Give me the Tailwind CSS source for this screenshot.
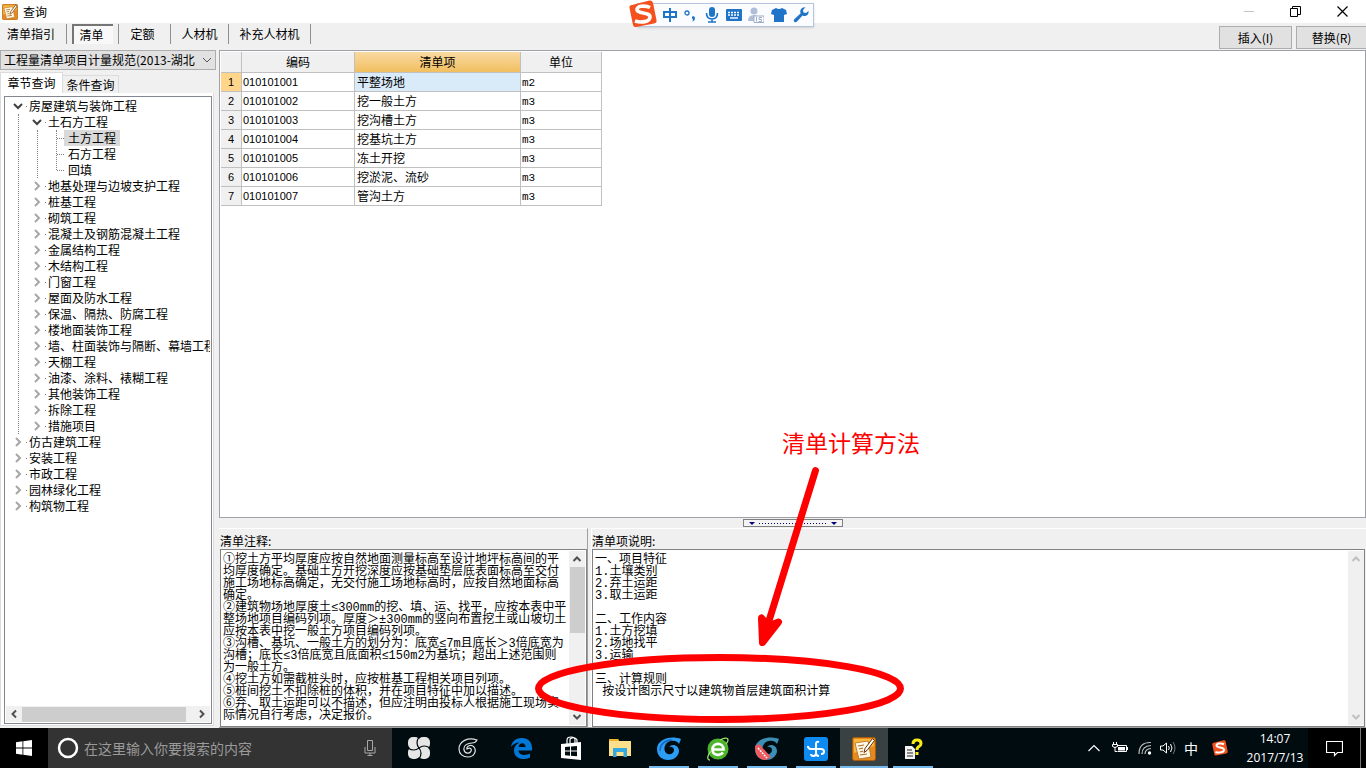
<!DOCTYPE html>
<html lang="zh-CN">
<head>
<meta charset="utf-8">
<title>查询</title>
<script src="https://cdn.jsdelivr.net/npm/@tailwindcss/browser@4"></script>
</head>
<body class="relative flex h-screen flex-col overflow-hidden bg-[#f0f0f0] font-['Noto_Sans_CJK_SC',sans-serif] text-xs leading-4 text-black">
<svg class="hidden">
  <symbol id="right" viewBox="0 0 10 10"><path d="M3 1l4 4-4 4" fill="none" stroke="#a6a6a6" stroke-width="2"/></symbol>
  <symbol id="down" viewBox="0 0 10 10"><path d="M1 3l4 4 4-4" fill="none" stroke="#404040" stroke-width="2"/></symbol>
  <symbol id="arrow" viewBox="0 0 10 10"><path d="M1.500 7L5 3.500 8.500 7" fill="none" stroke="currentColor" stroke-width="2"/></symbol>
  <symbol id="note" viewBox="0 0 24 24">
    <rect x=".5" y=".5" width="23" height="23" rx="2" fill="#e58a1c" stroke="#a85a0c"/>
    <path d="M2 2h20v7L2 16z" fill="#f9b93f"/>
    <path d="M3 6l13-2 3 16-12 2z" fill="#fff8e4" stroke="#b36a1e" stroke-width=".8"/>
    <path d="M6 9l6-1M7 12l4-1M8 15l3-1M8 18l7-1" stroke="#b06a2a" stroke-width="1.200"/>
    <path d="M20.500 1.500l2 2-7.500 10-3 2 1-4z" fill="#fff" stroke="#6a3206" stroke-width="1"/>
  </symbol>
  <symbol id="sogou" viewBox="0 0 28 28">
    <path d="M3 5Q0 5 .5 8L4 25q.5 2.500 3 2l18-3.500q3-.5 2.500-3.500L24 3q-.5-3-3.500-2.500z" fill="#f4511e"/>
    <path d="M21 7.500C16 5 7 6 8 10s13 2 13 7-9 6-15 4" fill="none" stroke="#fff" stroke-width="3.600"/>
  </symbol>
</svg>

<header class="flex h-[23px] shrink-0 items-center bg-white pl-[2px]">
  <svg class="size-4"><use href="#note"/></svg>
  <h1 class="ml-[5px] flex-1">查询</h1>
  <button aria-label="最小化" class="flex h-full w-[46px] items-center justify-center"><svg class="size-[11px]" viewBox="0 0 11 11"><path d="M0 5.500h10" stroke="#c4c4c4"/></svg></button>
  <button aria-label="还原" class="flex h-full w-[46px] items-center justify-center"><svg class="size-[11px]" viewBox="0 0 11 11"><path d="M.5 2.500h7v8h-7zM2.500 2.500v-2h8v8h-3" fill="none" stroke="#000"/></svg></button>
  <button aria-label="关闭" class="flex h-full w-12 items-center justify-center"><svg class="size-[11px]" viewBox="0 0 11 11"><path d="M.5.5l10 10M10.500.5l-10 10" stroke="#000" stroke-width="1.200"/></svg></button>
</header>

<nav class="flex h-[27px] shrink-0 items-start">
  <button class="mt-px h-5 w-[67px] border-r border-[#909090] pr-1">清单指引</button>
  <button class="mt-px ml-[5px] h-5 w-[41px] border-t-2 border-l-2 border-[#757575] bg-[#f8f8f8] pr-1">清单</button>
  <span class="mt-px ml-[5px] h-5 w-px bg-[#909090]"></span>
  <button class="mt-px h-5 w-[52px] border-r border-[#909090] pr-1">定额</button>
  <button class="mt-px h-5 w-[58px] border-r border-[#909090]">人材机</button>
  <button class="mt-px h-5 w-[82px] border-r border-[#909090]">补充人材机</button>
  <span class="flex-1"></span>
  <button class="mt-[3px] mr-1 h-[23px] w-[73px] border border-[#adadad] bg-[#e1e1e1]">插入(I)</button>
  <button class="mt-[3px] h-[23px] w-[70px] border border-r-0 border-[#adadad] bg-[#e1e1e1]">替换(R)</button>
</nav>

<div class="flex min-h-0 flex-1">
  <aside class="flex w-[216px] shrink-0 flex-col">
    <div class="relative">
      <select aria-label="清单规范" class="block h-5 w-full appearance-none border border-[#adadad] bg-[#e1e1e1] pl-[3px] leading-4"><option>工程量清单项目计量规范(2013-湖北</option></select>
      <svg class="pointer-events-none absolute top-[5px] right-1 size-[10px]" viewBox="0 0 10 10"><path d="M1 3l4 4 4-4" fill="none" stroke="#555"/></svg>
    </div>
    <div class="mt-[2px] flex h-[21px] items-end">
      <button class="h-[21px] w-[63px] border border-b-0 border-[#dcdcdc] bg-white">章节查询</button>
      <button class="h-[18px] w-14 border-t border-r border-[#dcdcdc]">条件查询</button>
    </div>
    <div class="mr-[2px] mb-[2px] flex min-h-0 flex-1 flex-col border border-t-0 border-[#dcdcdc] bg-white pt-[3px] pr-px pb-px pl-[3px]">
      <div class="flex min-h-0 flex-1 flex-col overflow-hidden border border-[#828790]">
        <ul class="mr-px flex-1 overflow-hidden pt-px pl-2 whitespace-nowrap">
          <li>
            <div class="flex h-4 items-center"><svg class="size-[10px]"><use href="#down"/></svg><i class="mr-[2px] ml-[3px] size-px bg-[#808080]"></i>房屋建筑与装饰工程</div>
            <ul class="ml-[5px] border-l border-dotted border-[#808080] pl-[13px]">
              <li>
                <div class="flex h-4 items-center"><svg class="size-[10px]"><use href="#down"/></svg><i class="mr-[2px] ml-[3px] size-px bg-[#808080]"></i>土石方工程</div>
                <div class="ml-[5px] h-12 border-l border-dotted border-[#808080] pl-[18px]">
                  <ul class="h-10 border-l border-dotted border-[#808080]">
                    <li class="flex h-4 items-center"><i class="w-[7px] border-t border-dotted border-[#808080]"></i><span class="bg-[#d9d9d9] px-1">土方工程</span></li>
                    <li class="flex h-4 items-center"><i class="w-[7px] border-t border-dotted border-[#808080]"></i><span class="px-1">石方工程</span></li>
                    <li class="flex h-4 items-center"><i class="w-[7px] border-t border-dotted border-[#808080]"></i><span class="px-1">回填</span></li>
                  </ul>
                </div>
              </li>
              <li class="flex h-4 items-center"><svg class="size-[10px] shrink-0"><use href="#right"/></svg><i class="mr-[2px] ml-[3px] size-px bg-[#808080]"></i>地基处理与边坡支护工程</li>
              <li class="flex h-4 items-center"><svg class="size-[10px] shrink-0"><use href="#right"/></svg><i class="mr-[2px] ml-[3px] size-px bg-[#808080]"></i>桩基工程</li>
              <li class="flex h-4 items-center"><svg class="size-[10px] shrink-0"><use href="#right"/></svg><i class="mr-[2px] ml-[3px] size-px bg-[#808080]"></i>砌筑工程</li>
              <li class="flex h-4 items-center"><svg class="size-[10px] shrink-0"><use href="#right"/></svg><i class="mr-[2px] ml-[3px] size-px bg-[#808080]"></i>混凝土及钢筋混凝土工程</li>
              <li class="flex h-4 items-center"><svg class="size-[10px] shrink-0"><use href="#right"/></svg><i class="mr-[2px] ml-[3px] size-px bg-[#808080]"></i>金属结构工程</li>
              <li class="flex h-4 items-center"><svg class="size-[10px] shrink-0"><use href="#right"/></svg><i class="mr-[2px] ml-[3px] size-px bg-[#808080]"></i>木结构工程</li>
              <li class="flex h-4 items-center"><svg class="size-[10px] shrink-0"><use href="#right"/></svg><i class="mr-[2px] ml-[3px] size-px bg-[#808080]"></i>门窗工程</li>
              <li class="flex h-4 items-center"><svg class="size-[10px] shrink-0"><use href="#right"/></svg><i class="mr-[2px] ml-[3px] size-px bg-[#808080]"></i>屋面及防水工程</li>
              <li class="flex h-4 items-center"><svg class="size-[10px] shrink-0"><use href="#right"/></svg><i class="mr-[2px] ml-[3px] size-px bg-[#808080]"></i>保温、隔热、防腐工程</li>
              <li class="flex h-4 items-center"><svg class="size-[10px] shrink-0"><use href="#right"/></svg><i class="mr-[2px] ml-[3px] size-px bg-[#808080]"></i>楼地面装饰工程</li>
              <li class="flex h-4 items-center"><svg class="size-[10px] shrink-0"><use href="#right"/></svg><i class="mr-[2px] ml-[3px] size-px shrink-0 bg-[#808080]"></i>墙、柱面装饰与隔断、幕墙工程</li>
              <li class="flex h-4 items-center"><svg class="size-[10px] shrink-0"><use href="#right"/></svg><i class="mr-[2px] ml-[3px] size-px bg-[#808080]"></i>天棚工程</li>
              <li class="flex h-4 items-center"><svg class="size-[10px] shrink-0"><use href="#right"/></svg><i class="mr-[2px] ml-[3px] size-px bg-[#808080]"></i>油漆、涂料、裱糊工程</li>
              <li class="flex h-4 items-center"><svg class="size-[10px] shrink-0"><use href="#right"/></svg><i class="mr-[2px] ml-[3px] size-px bg-[#808080]"></i>其他装饰工程</li>
              <li class="flex h-4 items-center"><svg class="size-[10px] shrink-0"><use href="#right"/></svg><i class="mr-[2px] ml-[3px] size-px bg-[#808080]"></i>拆除工程</li>
              <li class="flex h-4 items-center"><svg class="size-[10px] shrink-0"><use href="#right"/></svg><i class="mr-[2px] ml-[3px] size-px bg-[#808080]"></i>措施项目</li>
            </ul>
          </li>
          <li class="flex h-4 items-center"><svg class="size-[10px]"><use href="#right"/></svg><i class="mr-[2px] ml-[3px] size-px bg-[#808080]"></i>仿古建筑工程</li>
          <li class="flex h-4 items-center"><svg class="size-[10px]"><use href="#right"/></svg><i class="mr-[2px] ml-[3px] size-px bg-[#808080]"></i>安装工程</li>
          <li class="flex h-4 items-center"><svg class="size-[10px]"><use href="#right"/></svg><i class="mr-[2px] ml-[3px] size-px bg-[#808080]"></i>市政工程</li>
          <li class="flex h-4 items-center"><svg class="size-[10px]"><use href="#right"/></svg><i class="mr-[2px] ml-[3px] size-px bg-[#808080]"></i>园林绿化工程</li>
          <li class="flex h-4 items-center"><svg class="size-[10px]"><use href="#right"/></svg><i class="mr-[2px] ml-[3px] size-px bg-[#808080]"></i>构筑物工程</li>
        </ul>
        <div class="mx-px mb-px flex h-4 items-center bg-[#f0f0f0] text-[#505050]">
          <svg class="mx-[3px] size-[10px] -rotate-90"><use href="#arrow"/></svg>
          <div class="mr-2 h-[15px] flex-1 bg-[#cdcdcd]"></div>
          <svg class="mx-[3px] size-[10px] rotate-90"><use href="#arrow"/></svg>
        </div>
      </div>
    </div>
  </aside>

  <main class="ml-[3px] flex min-w-0 flex-1 flex-col">
    <section class="min-h-0 flex-1 border border-[#a0a0a8] bg-white pt-px pl-px">
      <table class="w-[381px] table-fixed border-separate border-spacing-0">
        <colgroup><col class="w-[21px]"><col class="w-[113px]"><col class="w-[166px]"><col class="w-[81px]"></colgroup>
        <thead>
          <tr class="h-[21px] bg-[#f0f0f0]">
            <th class="border-r border-b border-[#c0c0c0] p-0"></th>
            <th class="border-r border-b border-[#c0c0c0] p-0 font-normal">编码</th>
            <th class="border-r border-b border-[#c0c0c0] bg-linear-to-b from-[#f9d9a0] to-[#f1bf5f] p-0 font-normal">清单项</th>
            <th class="border-r border-b border-[#c0c0c0] p-0 font-normal">单位</th>
          </tr>
        </thead>
        <tbody>
          <tr class="h-[19px]"><th class="border-r border-b border-[#c0c0c0] bg-[#ffd58c] p-0 font-['Liberation_Sans',sans-serif] text-[11px] font-normal">1</th><td class="border-r border-b border-[#c0c0c0] p-0 pl-px font-['Liberation_Sans',sans-serif] text-[11px]">010101001</td><td class="border-r border-b border-[#c0c0c0] bg-[#d9eaf9] p-0 pl-[2px]">平整场地</td><td class="border-r border-b border-[#c0c0c0] p-0 pt-px pl-px font-['Liberation_Mono',monospace] text-[11px]">m2</td></tr>
          <tr class="h-[19px]"><th class="border-r border-b border-[#c0c0c0] bg-[#f0f0f0] p-0 font-['Liberation_Sans',sans-serif] text-[11px] font-normal">2</th><td class="border-r border-b border-[#c0c0c0] p-0 pl-px font-['Liberation_Sans',sans-serif] text-[11px]">010101002</td><td class="border-r border-b border-[#c0c0c0] p-0 pl-[2px]">挖一般土方</td><td class="border-r border-b border-[#c0c0c0] p-0 pt-px pl-px font-['Liberation_Mono',monospace] text-[11px]">m3</td></tr>
          <tr class="h-[19px]"><th class="border-r border-b border-[#c0c0c0] bg-[#f0f0f0] p-0 font-['Liberation_Sans',sans-serif] text-[11px] font-normal">3</th><td class="border-r border-b border-[#c0c0c0] p-0 pl-px font-['Liberation_Sans',sans-serif] text-[11px]">010101003</td><td class="border-r border-b border-[#c0c0c0] p-0 pl-[2px]">挖沟槽土方</td><td class="border-r border-b border-[#c0c0c0] p-0 pt-px pl-px font-['Liberation_Mono',monospace] text-[11px]">m3</td></tr>
          <tr class="h-[19px]"><th class="border-r border-b border-[#c0c0c0] bg-[#f0f0f0] p-0 font-['Liberation_Sans',sans-serif] text-[11px] font-normal">4</th><td class="border-r border-b border-[#c0c0c0] p-0 pl-px font-['Liberation_Sans',sans-serif] text-[11px]">010101004</td><td class="border-r border-b border-[#c0c0c0] p-0 pl-[2px]">挖基坑土方</td><td class="border-r border-b border-[#c0c0c0] p-0 pt-px pl-px font-['Liberation_Mono',monospace] text-[11px]">m3</td></tr>
          <tr class="h-[19px]"><th class="border-r border-b border-[#c0c0c0] bg-[#f0f0f0] p-0 font-['Liberation_Sans',sans-serif] text-[11px] font-normal">5</th><td class="border-r border-b border-[#c0c0c0] p-0 pl-px font-['Liberation_Sans',sans-serif] text-[11px]">010101005</td><td class="border-r border-b border-[#c0c0c0] p-0 pl-[2px]">冻土开挖</td><td class="border-r border-b border-[#c0c0c0] p-0 pt-px pl-px font-['Liberation_Mono',monospace] text-[11px]">m3</td></tr>
          <tr class="h-[19px]"><th class="border-r border-b border-[#c0c0c0] bg-[#f0f0f0] p-0 font-['Liberation_Sans',sans-serif] text-[11px] font-normal">6</th><td class="border-r border-b border-[#c0c0c0] p-0 pl-px font-['Liberation_Sans',sans-serif] text-[11px]">010101006</td><td class="border-r border-b border-[#c0c0c0] p-0 pl-[2px]">挖淤泥、流砂</td><td class="border-r border-b border-[#c0c0c0] p-0 pt-px pl-px font-['Liberation_Mono',monospace] text-[11px]">m3</td></tr>
          <tr class="h-[19px]"><th class="border-r border-b border-[#c0c0c0] bg-[#f0f0f0] p-0 font-['Liberation_Sans',sans-serif] text-[11px] font-normal">7</th><td class="border-r border-b border-[#c0c0c0] p-0 pl-px font-['Liberation_Sans',sans-serif] text-[11px]">010101007</td><td class="border-r border-b border-[#c0c0c0] p-0 pl-[2px]">管沟土方</td><td class="border-r border-b border-[#c0c0c0] p-0 pt-px pl-px font-['Liberation_Mono',monospace] text-[11px]">m3</td></tr>
        </tbody>
      </table>
    </section>

    <div class="flex h-[10px] shrink-0 items-center justify-center">
      <button aria-label="折叠" class="flex h-2 w-[100px] items-center justify-between border border-[#808080] bg-[#f4f4f4] px-[5px]">
        <svg class="h-[3px] w-[6px]" viewBox="0 0 6 3"><path d="M0 0h6L3 3z" fill="#000080"/></svg>
        <svg class="h-px w-[68px]" viewBox="0 0 68 1"><path d="M0 .5h68" stroke="#000080" stroke-dasharray="1 2"/></svg>
        <svg class="h-[3px] w-[6px]" viewBox="0 0 6 3"><path d="M0 0h6L3 3z" fill="#000080"/></svg>
      </button>
    </div>

    <div class="flex h-[200px] shrink-0 border-b border-[#a0a0a0]">
      <section class="flex w-[369px] shrink-0 flex-col border-t border-r border-t-white border-r-[#a0a0a0] pl-px">
        <label for="notes" class="h-5 pt-[4px]">清单注释:</label>
        <div class="flex min-h-0 flex-1 border border-[#828282] bg-white">
          <textarea id="notes" readonly wrap="off" class="block min-w-0 flex-1 resize-none overflow-hidden pt-[4px] pl-[2px] font-['Liberation_Mono','Noto_Sans_CJK_SC',monospace] text-xs leading-3 outline-none">①挖土方平均厚度应按自然地面测量标高至设计地坪标高间的平
均厚度确定。基础土方开挖深度应按基础垫层底表面标高至交付
施工场地标高确定，无交付施工场地标高时，应按自然地面标高
确定。
②建筑物场地厚度土≤300mm的挖、填、运、找平，应按本表中平
整场地项目编码列项。厚度＞±300mm的竖向布置挖土或山坡切土
应按本表中挖一般土方项目编码列项。
③沟槽、基坑、一般土方的划分为：底宽≤7m且底长＞3倍底宽为
沟槽；底长≤3倍底宽且底面积≤150m2为基坑；超出上述范围则
为一般土方。
④挖土方如需截桩头时，应按桩基工程相关项目列项。
⑤桩间挖土不扣除桩的体积，并在项目特征中加以描述。
⑥弃、取土运距可以不描述，但应注明由投标人根据施工现场实
际情况自行考虑，决定报价。</textarea>
          <div class="my-px mr-px flex w-4 flex-col items-center bg-[#f0f0f0] text-[#505050]">
            <svg class="my-[3px] size-[10px]"><use href="#arrow"/></svg>
            <div class="h-[66px] w-[15px] bg-[#cdcdcd]"></div>
            <svg class="mt-auto mb-[3px] size-[10px] rotate-180"><use href="#arrow"/></svg>
          </div>
        </div>
      </section>
      <section class="ml-[3px] flex min-w-0 flex-1 flex-col border-t border-l border-white pr-px">
        <label for="desc" class="h-5 pt-[4px]">清单项说明:</label>
        <div class="flex min-h-0 flex-1 border border-[#828282] bg-white">
          <textarea id="desc" readonly class="block min-w-0 flex-1 resize-none overflow-hidden pt-[4px] pl-[2px] font-['Liberation_Mono','Noto_Sans_CJK_SC',monospace] text-xs leading-3 outline-none">一、项目特征
1.土壤类别
2.弃土运距
3.取土运距

二、工作内容
1.土方挖填
2.场地找平
3.运输

三、计算规则
 按设计图示尺寸以建筑物首层建筑面积计算</textarea>
          <div class="my-px flex w-4 flex-col items-center justify-between bg-[#f0f0f0] py-[3px] text-[#bfbfbf]">
            <svg class="size-[10px]"><use href="#arrow"/></svg>
            <svg class="size-[10px] rotate-180"><use href="#arrow"/></svg>
          </div>
        </div>
      </section>
    </div>
  </main>
</div>

<footer class="flex h-10 shrink-0 bg-[#010c10] text-white">
  <button aria-label="开始" class="flex w-12 items-center justify-center bg-black"><svg class="size-4" viewBox="0 0 16 16"><path d="M0 2.200L6.500 1.300V7.600H0zM7.300 1.200L16 0v7.600H7.300zM0 8.400h6.500v6.300L0 13.800zM7.300 8.400H16V16l-8.700-1.200z" fill="#fff"/></svg></button>
  <div class="flex w-[344px] items-center bg-[#333333] pl-2">
    <svg class="size-6" viewBox="0 0 24 24"><circle cx="12" cy="12" r="9" fill="none" stroke="#fff" stroke-width="2.500"/></svg>
    <input aria-label="搜索" placeholder="在这里输入你要搜索的内容" class="ml-1 min-w-0 flex-1 bg-transparent text-sm placeholder:text-[#9a9a9a]">
    <svg class="mr-[14px] size-4" viewBox="0 0 16 16"><path d="M5.500.5h5v10h-5zM3 7v6h10V7M8 13v2.500M5.500 15.500h5" fill="none" stroke="#a8a8a8"/></svg>
  </div>
  <div class="ml-[2px] flex">
    <button aria-label="四叶" class="flex w-[49px] items-center justify-center"><svg class="size-[22px]" viewBox="0 0 22 22"><g fill="#e6e6e6"><rect width="12" height="12" rx="5"/><rect x="10" width="12" height="12" rx="5"/><rect y="10" width="12" height="12" rx="5"/><rect x="10" y="10" width="12" height="12" rx="5"/></g><path d="M11 11Q7 6 11 0M11 11q5-4 11 0M11 11q4 5 0 11M11 11q-5 4-11 0" fill="none" stroke="#010c10" stroke-width="1.200"/></svg></button>
    <button aria-label="广联达" class="flex w-[49px] items-center justify-center"><svg class="size-5" viewBox="0 0 20 20"><path d="M19 2C10-1 1 3 1 11c0 5 4 8 9 8 6 0 9-6 6-10-3-3-8-1-7 2 3-2 5 0 4 2-1 3-6 3-7-1-1-5 4-7 8-7 3 0 4-1 5-3z" fill="none" stroke="#e2e2e2" stroke-width="1.200"/></svg></button>
    <button aria-label="Edge" class="ml-[5px] flex w-[49px] items-center justify-center"><svg class="size-[21px]" viewBox="0 0 21 21"><path d="M0 9C1 3 5 0 11 0c6 0 10 4 10 10v2.500H7.500c.3 5 7 5.500 11.500 3v4c-7 3.500-16 1-16-7C3 9 5 6 8.500 4.500 5 4.500 2 6 0 9zm7.600 0h7C14.500 4 8 4 7.600 9z" fill="#0078d7"/></svg></button>
    <button aria-label="应用商店" class="flex w-[49px] items-center justify-center"><svg class="size-6" viewBox="0 0 24 24"><path d="M8 8V4q0-3 4-3t4 3v4M11 7V3q5-3 7 1v3" fill="none" stroke="#fff" stroke-width="1.200"/><path d="M2 8l20-2v18L2 22z" fill="#fff"/><path d="M6 11l5-.5v4H6zM12 10.400l6-.5v4.600h-6zM6 15.500h5v4.200l-5-.4zM12 15.500h6v4.800l-6-.6z" fill="#010c10"/></svg></button>
    <button aria-label="文件资源管理器" class="flex w-[49px] items-center justify-center"><svg class="h-5 w-[22px]" viewBox="0 0 22 20"><path d="M0 1h9l1 2h12v15H0z" fill="#ffe08a"/><path d="M0 1h9l1 2H0z" fill="#f0b429"/><path d="M4 10h14v9h-3.500v-5h-7v5H4z" fill="#34a9e0"/></svg></button>
    <button aria-label="广联达计价" class="flex w-[49px] flex-col items-center justify-end"><svg class="mb-1 size-6" viewBox="0 0 24 24"><path d="M24 2C14-2 0 2 0 12c0 7 5 11 11 11 7 0 11-5 11-9 0-6-7-8-10-4 3-1 5 1 5 3 0 3-3 5-6 4-6-2-4-12 3-13 4-1 7 1 8 3z" fill="#2b9df4"/><path d="M3 14C3 7 8 3 15 3" fill="none" stroke="#1565c0" stroke-width="1.500"/></svg><span class="mt-px h-[2px] w-10 bg-[#76b9ed]"></span></button>
    <button aria-label="浏览器" class="flex w-[49px] flex-col items-center justify-end"><svg class="mb-1 size-6" viewBox="0 0 24 24"><circle cx="12" cy="12" r="10.500" fill="#4db52c"/><path d="M7 12.500h10.500C17.500 5 6.500 5 6.500 12.500c0 6.500 8 6.500 10.500 3" fill="none" stroke="#fff" stroke-width="2.600"/><path d="M4 23C0 23 2 17 5 14M14 3c4-2 8-3 8 0q0 2-2 4" fill="none" stroke="#9be56b" stroke-width="1.300"/></svg><span class="mt-px h-[2px] w-10 bg-[#76b9ed]"></span></button>
    <button aria-label="广联达算量" class="flex w-[49px] flex-col items-center justify-end"><svg class="mb-1 size-6" viewBox="0 0 24 24"><path d="M24 2C14-2 0 2 0 12c0 7 5 11 11 11 7 0 11-5 11-9 0-6-7-8-10-4 3-1 5 1 5 3 0 3-3 5-6 4-6-2-4-12 3-13 4-1 7 1 8 3z" fill="#3c8fb4"/><path d="M0 9l4-2 12 13-5 3q-11 0-11-14z" fill="#ed5a5f"/><path d="M3 11l9 10" stroke="#fff" stroke-width="1.500" stroke-dasharray="2 1"/></svg><span class="mt-px h-[2px] w-10 bg-[#76b9ed]"></span></button>
    <button aria-label="云应用" class="flex w-[49px] flex-col items-center justify-end"><svg class="mb-1 size-6" viewBox="0 0 24 24"><rect width="24" height="24" rx="3" fill="#0e8af0"/><path d="M15 5q-3-1-3 2v9q0 3-2.500 3T7 17M4 9q0 3 3 3h10q3 0 3 2.500t-3 2.500M12 16q0 3 3 3" fill="none" stroke="#fff" stroke-width="2"/></svg><span class="mt-px h-[2px] w-10 bg-[#76b9ed]"></span></button>
    <button aria-label="查询" class="flex w-12 flex-col items-center justify-end bg-[#3a4143]"><svg class="mb-1 size-6"><use href="#note"/></svg><span class="mt-px h-[2px] w-full bg-[#76b9ed]"></span></button>
    <button aria-label="帮助" class="flex w-[49px] flex-col items-center justify-end"><svg class="mb-1 size-6" viewBox="0 0 24 24"><path d="M4 9h7l3 3v10H4z" fill="#f2f2f2"/><path d="M6 13h5M6 16h6M6 19h6" stroke="#222"/><path d="M12 7q0-4 4-4t4 3.500q0 2-2 3t-2 3.500M16 15v3" fill="none" stroke="#f7ec13" stroke-width="3"/></svg><span class="mt-px h-[2px] w-10 bg-[#76b9ed]"></span></button>
  </div>
  <div class="ml-auto flex items-center">
    <svg class="mr-3 h-3 w-3" viewBox="0 0 12 12"><path d="M.5 9L6 3.500 11.500 9" fill="none" stroke="#fff" stroke-width="1.200"/></svg>
    <svg class="mr-[10px] h-4 w-4" viewBox="0 0 16 16"><path d="M5 5.500h9.500v6h-9M15.500 7v3" fill="none" stroke="#fff"/><path d="M6 7h7v3.500H6z" fill="#fff"/><path d="M1.500 2v2M4.500 2v2M.5 4.500h5v2q-2.500 2-5 0zM3 7v4.500h2" fill="none" stroke="#fff"/></svg>
    <svg class="mr-2 h-[14px] w-[14px]" viewBox="0 0 14 14"><path d="M1 13Q1 1 13 1.500M4 13Q4 5 13 4.500M7 13q0-5 6-5.500" fill="none" stroke="#bdbdbd" stroke-width="1.200"/><circle cx="11.500" cy="12" r="1.700" fill="#fff"/></svg>
    <svg class="mr-2 h-4 w-4" viewBox="0 0 16 16"><path d="M.5 6H3l3.500-3v10L3 10H.5zM8.500 6q1.500 2 0 4M10.500 4q3 4 0 8" fill="none" stroke="#fff"/><path d="M13 2q4 6 0 12" fill="none" stroke="#777"/></svg>
    <span class="mr-[14px] text-sm">中</span>
    <svg class="mr-4 size-[16px]"><use href="#sogou"/></svg>
    <time class="w-[62px] text-center font-['Open_Sans',sans-serif] text-xs leading-[19px]">14:07<br>2017/7/13</time>
    <button aria-label="通知" class="ml-[2px] flex h-full w-[52px] items-center justify-center bg-black"><svg class="size-[17px]" viewBox="0 0 17 17"><path d="M.5 1.500h16v11h-5l-3 3v-3h-8z" fill="none" stroke="#fff" stroke-width="1.200"/></svg></button>
    <span class="h-full w-[6px] border-l border-[#777] bg-black"></span>
  </div>
</footer>

<!-- Floating input-method toolbar -->
<div class="absolute top-0 left-[629px] flex">
  <div class="mt-[3px] ml-2 flex h-[24px] w-[177px] items-center justify-between border border-[#b4c4dc] bg-[#fafcff] pr-1 pl-[25px] text-[#1f74c8] shadow-sm">
    <svg class="size-[14px]" viewBox="0 0 14 14"><path d="M1 4h12v5H1zM7 0v14" fill="none" stroke="currentColor" stroke-width="2"/></svg>
    <svg class="size-[14px]" viewBox="0 0 14 14"><circle cx="4" cy="5" r="2" fill="none" stroke="currentColor" stroke-width="1.300"/><path d="M9 8.500q3-1 3 1.500 0 3-3 3.500 2-2 0-3z" fill="currentColor"/></svg>
    <svg class="size-4" viewBox="0 0 16 16"><rect x="5" y="0" width="6" height="10" rx="3" fill="currentColor"/><path d="M2.500 6q0 6 5.500 6t5.500-6M8 12v3M4 15h8" fill="none" stroke="currentColor" stroke-width="1.600"/></svg>
    <svg class="h-3 w-4" viewBox="0 0 16 12"><rect width="16" height="12" rx="1" fill="currentColor"/><path d="M2 3.500h12M2 6h12" stroke="#fff" stroke-width="1.400" stroke-dasharray="2 1"/><path d="M4 9h8" stroke="#fff" stroke-width="1.400"/></svg>
    <svg class="size-4" viewBox="0 0 16 16"><circle cx="6" cy="4" r="3.500" fill="#b0bfd8"/><path d="M0 14q0-6 6-6t6 6z" fill="#b0bfd8"/><path d="M6 9h10v6.500H6z" fill="#fff" stroke="#9fafca"/><path d="M8.500 10v4.500M14 10.500h-3v2h2.500v2h-3" fill="none" stroke="#9fafca"/></svg>
    <svg class="h-[14px] w-4" viewBox="0 0 16 14"><path d="M1 2l4-2q3 2 6 0l4 2 1 4-3 1v7H3V7L0 6z" fill="currentColor"/></svg>
    <svg class="size-4" viewBox="0 0 16 16"><path d="M15.500 4q.5 3-2 4.500-2 1-4 0L4 14.500Q2.500 16 1.200 14.800 0 13.500 1.500 12L7.500 6.500Q6.500 4 8 2q1.500-2 4.500-1.700L10 3l.5 2.500L13 6z" fill="currentColor"/></svg>
  </div>
  <svg class="absolute top-0 left-0 size-7"><use href="#sogou"/></svg>
</div>

<!-- Hand-drawn markup above the window -->
<p class="absolute top-[430px] left-[782px] text-[23px] leading-6 text-[#ff0000]">清单计算方法</p>
<svg class="pointer-events-none absolute top-[460px] left-[530px] h-[268px] w-[380px]" viewBox="530 460 380 268" fill="none" stroke="#ff0000" stroke-width="7" stroke-linecap="round" stroke-linejoin="round">
  <ellipse cx="719.500" cy="688.500" rx="181" ry="31"/>
  <path d="M815.500 470.500L768 624"/>
  <path d="M761.500 618l1 24.500L778.500 622l-10 4z" fill="#ff0000"/>
</svg>
</body>
</html>
